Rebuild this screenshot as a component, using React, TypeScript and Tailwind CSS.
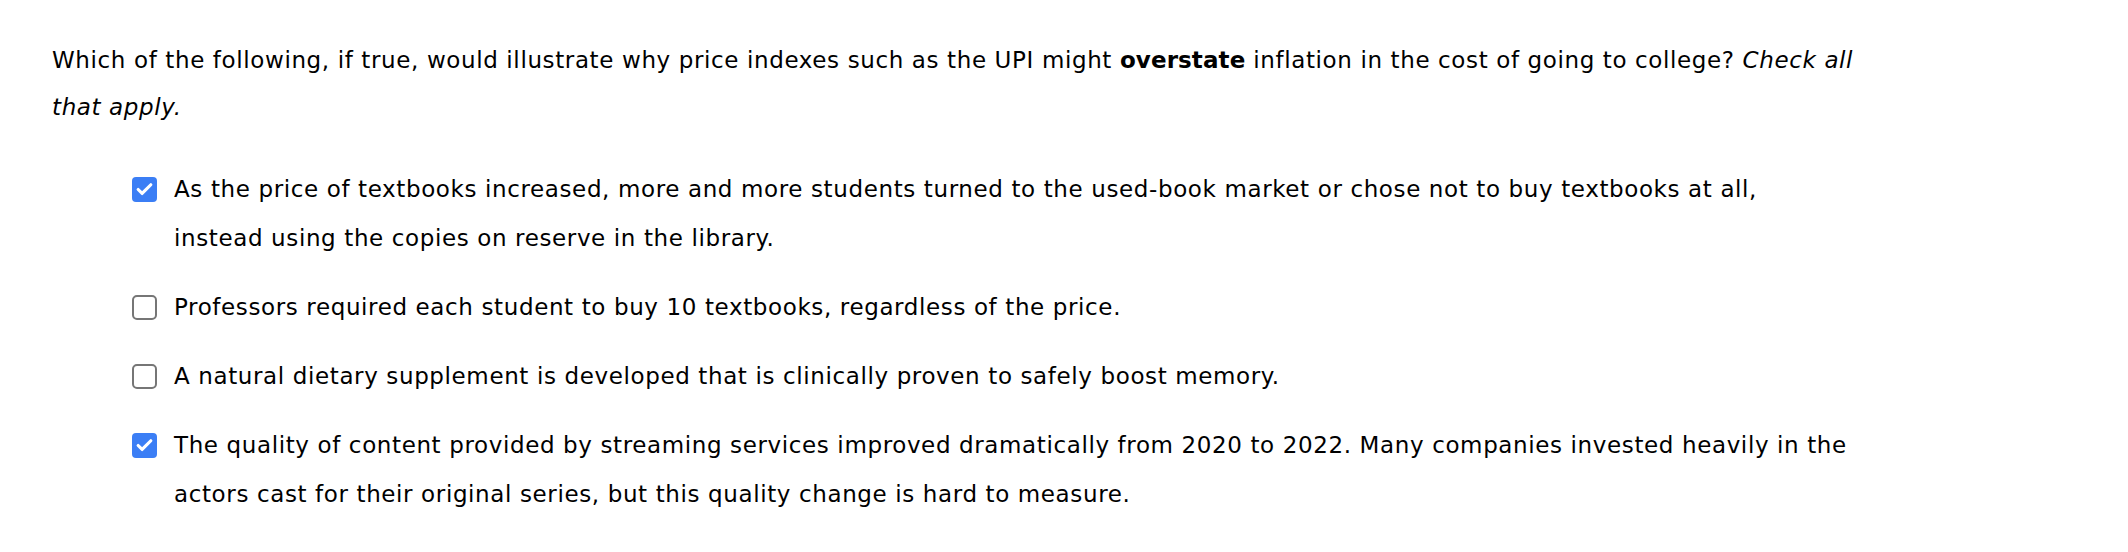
import { Check } from "lucide-react";
import type { ReactNode } from "react";

type Option = {
    text: ReactNode;
    checked: boolean;
};

const options: Option[] = [
    {
        text: (
            <>
                As the price of textbooks increased, more and more students turned to the used-book market or chose not to buy textbooks at all,
                <br />
                instead using the copies on reserve in the library.
            </>
        ),
        checked: true,
    },
    {
        text: "Professors required each student to buy 10 textbooks, regardless of the price.",
        checked: false,
    },
    {
        text: "A natural dietary supplement is developed that is clinically proven to safely boost memory.",
        checked: false,
    },
    {
        text: "The quality of content provided by streaming services improved dramatically from 2020 to 2022. Many companies invested heavily in the actors cast for their original series, but this quality change is hard to measure.",
        checked: true,
    },
];

const Box = ({ checked }: { checked: boolean }) => {
    if (checked) {
        return (
            <span className="mt-[12px] flex h-[25px] w-[25px] shrink-0 items-center justify-center rounded-[4px] bg-[#3b7ef5]">
                <Check size={19} strokeWidth={4} className="text-white" />
            </span>
        );
    }
    return <span className="mt-[12px] h-[25px] w-[25px] shrink-0 rounded-[5px] border-2 border-[#767676] bg-white"></span>;
};

export default function App() {
    return (
        <div className="min-h-[552px] w-[2128px] bg-white pl-[52px] pt-[37px] text-[23px] tracking-[0.62px] text-black" style={{ fontFamily: "Verdana, 'DejaVu Sans', sans-serif" }}>
            <p className="w-[1830px] leading-[47px]">
                Which of the following, if true, would illustrate why price indexes such as the UPI might <b className="tracking-[0.1px]">overstate</b> inflation in the cost of going to college? <i>Check all that apply.</i>
            </p>

            <ul className="mt-[34px] flex flex-col gap-[20px] pl-[80px]">
                {options.map((o, i) => (
                    <li key={i} className="flex gap-[17px]">
                        <Box checked={o.checked} />
                        <span className="w-[1720px] leading-[49px]">{o.text}</span>
                    </li>
                ))}
            </ul>
        </div>
    );
}
